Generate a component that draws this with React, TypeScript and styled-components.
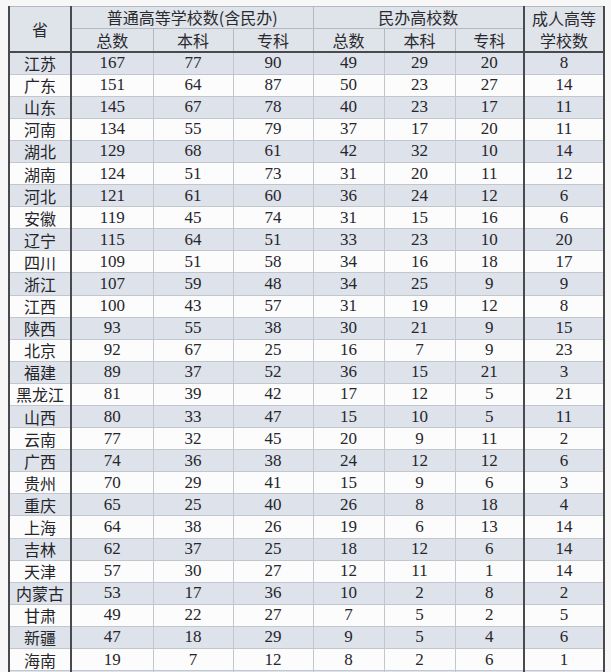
import React from "react";
import styled, { createGlobalStyle } from "styled-components";

const Global = createGlobalStyle`
  html, body { margin: 0; padding: 0; background: #f7f7f8; }
  body { overflow: hidden; }
`;

const Page = styled.div`
  padding: 6px 0 0 8px;
  width: 611px;
  height: 672px;
  box-sizing: border-box;
  overflow: hidden;
`;

const Table = styled.table`
  border-collapse: collapse;
  table-layout: fixed;
  width: 595px;
  border-left: 2px solid #4a4a4e;
  border-right: 2px solid #4a4a4e;
  border-top: 1px solid #9a9ca2;
  font-family: "Liberation Serif", "Noto Sans CJK SC", serif;
  color: #26262a;
`;

const HeadRow = styled.tr<{ $h: number }>`
  height: ${(p) => p.$h}px;
  background: #dfe3ea;
`;

const Th = styled.th<{ $darkRight?: boolean; $darkBottom?: boolean; $lh?: number }>`
  font-family: "Noto Sans CJK SC", sans-serif;
  font-weight: 400;
  font-size: 16px;
  line-height: ${(p) => p.$lh ?? 20}px;
  padding: 0;
  text-align: center;
  vertical-align: middle;
  border: 1px solid #b4b8c0;
  ${(p) => (p.$darkRight ? "border-right: 2px solid #4a4a4e;" : "")}
  ${(p) => (p.$darkBottom ? "border-bottom: 2px solid #4a4a4e;" : "")}
  color: #2a2a2e;
`;

const Row = styled.tr<{ $shaded: boolean }>`
  height: 22.1px;
  background: ${(p) => (p.$shaded ? "#dde2eb" : "#fcfcfd")};
`;

const Td = styled.td<{ $darkRight?: boolean; $cjk?: boolean }>`
  padding: 0;
  text-align: center;
  vertical-align: middle;
  border: 1px solid #c2c6cd;
  ${(p) => (p.$darkRight ? "border-right: 2px solid #4a4a4e;" : "")}
  font-family: ${(p) =>
    p.$cjk ? `"Noto Sans CJK SC", sans-serif` : `"Liberation Serif", serif`};
  font-size: ${(p) => (p.$cjk ? "16px" : "17px")};
  line-height: 20px;
  white-space: nowrap;
`;

const rows: [string, ...number[]][] = [
  ["江苏", 167, 77, 90, 49, 29, 20, 8],
  ["广东", 151, 64, 87, 50, 23, 27, 14],
  ["山东", 145, 67, 78, 40, 23, 17, 11],
  ["河南", 134, 55, 79, 37, 17, 20, 11],
  ["湖北", 129, 68, 61, 42, 32, 10, 14],
  ["湖南", 124, 51, 73, 31, 20, 11, 12],
  ["河北", 121, 61, 60, 36, 24, 12, 6],
  ["安徽", 119, 45, 74, 31, 15, 16, 6],
  ["辽宁", 115, 64, 51, 33, 23, 10, 20],
  ["四川", 109, 51, 58, 34, 16, 18, 17],
  ["浙江", 107, 59, 48, 34, 25, 9, 9],
  ["江西", 100, 43, 57, 31, 19, 12, 8],
  ["陕西", 93, 55, 38, 30, 21, 9, 15],
  ["北京", 92, 67, 25, 16, 7, 9, 23],
  ["福建", 89, 37, 52, 36, 15, 21, 3],
  ["黑龙江", 81, 39, 42, 17, 12, 5, 21],
  ["山西", 80, 33, 47, 15, 10, 5, 11],
  ["云南", 77, 32, 45, 20, 9, 11, 2],
  ["广西", 74, 36, 38, 24, 12, 12, 6],
  ["贵州", 70, 29, 41, 15, 9, 6, 3],
  ["重庆", 65, 25, 40, 26, 8, 18, 4],
  ["上海", 64, 38, 26, 19, 6, 13, 14],
  ["吉林", 62, 37, 25, 18, 12, 6, 14],
  ["天津", 57, 30, 27, 12, 11, 1, 14],
  ["内蒙古", 53, 17, 36, 10, 2, 8, 2],
  ["甘肃", 49, 22, 27, 7, 5, 2, 5],
  ["新疆", 47, 18, 29, 9, 5, 4, 6],
  ["海南", 19, 7, 12, 8, 2, 6, 1],
];

const widths = [62, 82, 80, 80, 71, 71, 69, 80];

export default function App() {
  return (
    <>
      <Global />
      <Page>
        <Table>
          <colgroup>
            {widths.map((w, i) => (
              <col key={i} style={{ width: w }} />
            ))}
          </colgroup>
          <thead>
            <HeadRow $h={21}>
              <Th rowSpan={2} $darkRight $darkBottom>
                省
              </Th>
              <Th colSpan={3}>普通高等学校数(含民办)</Th>
              <Th colSpan={3} $darkRight>
                民办高校数
              </Th>
              <Th rowSpan={2} $darkBottom $lh={22}>
                成人高等
                <br />
                学校数
              </Th>
            </HeadRow>
            <HeadRow $h={23}>
              <Th $darkBottom>总数</Th>
              <Th $darkBottom>本科</Th>
              <Th $darkBottom>专科</Th>
              <Th $darkBottom>总数</Th>
              <Th $darkBottom>本科</Th>
              <Th $darkBottom $darkRight>
                专科
              </Th>
            </HeadRow>
          </thead>
          <tbody>
            {rows.map((r, i) => (
              <Row key={r[0] as string} $shaded={i % 2 === 0}>
                <Td $cjk $darkRight>
                  {r[0]}
                </Td>
                {r.slice(1).map((v, j) => (
                  <Td key={j} $darkRight={j === 5}>
                    {v}
                  </Td>
                ))}
              </Row>
            ))}
            <Row $shaded>
              {[0, 1, 2, 3, 4, 5, 6, 7].map((j) => (
                <Td key={j} $darkRight={j === 0 || j === 6}>
                  &nbsp;
                </Td>
              ))}
            </Row>
          </tbody>
        </Table>
      </Page>
    </>
  );
}
